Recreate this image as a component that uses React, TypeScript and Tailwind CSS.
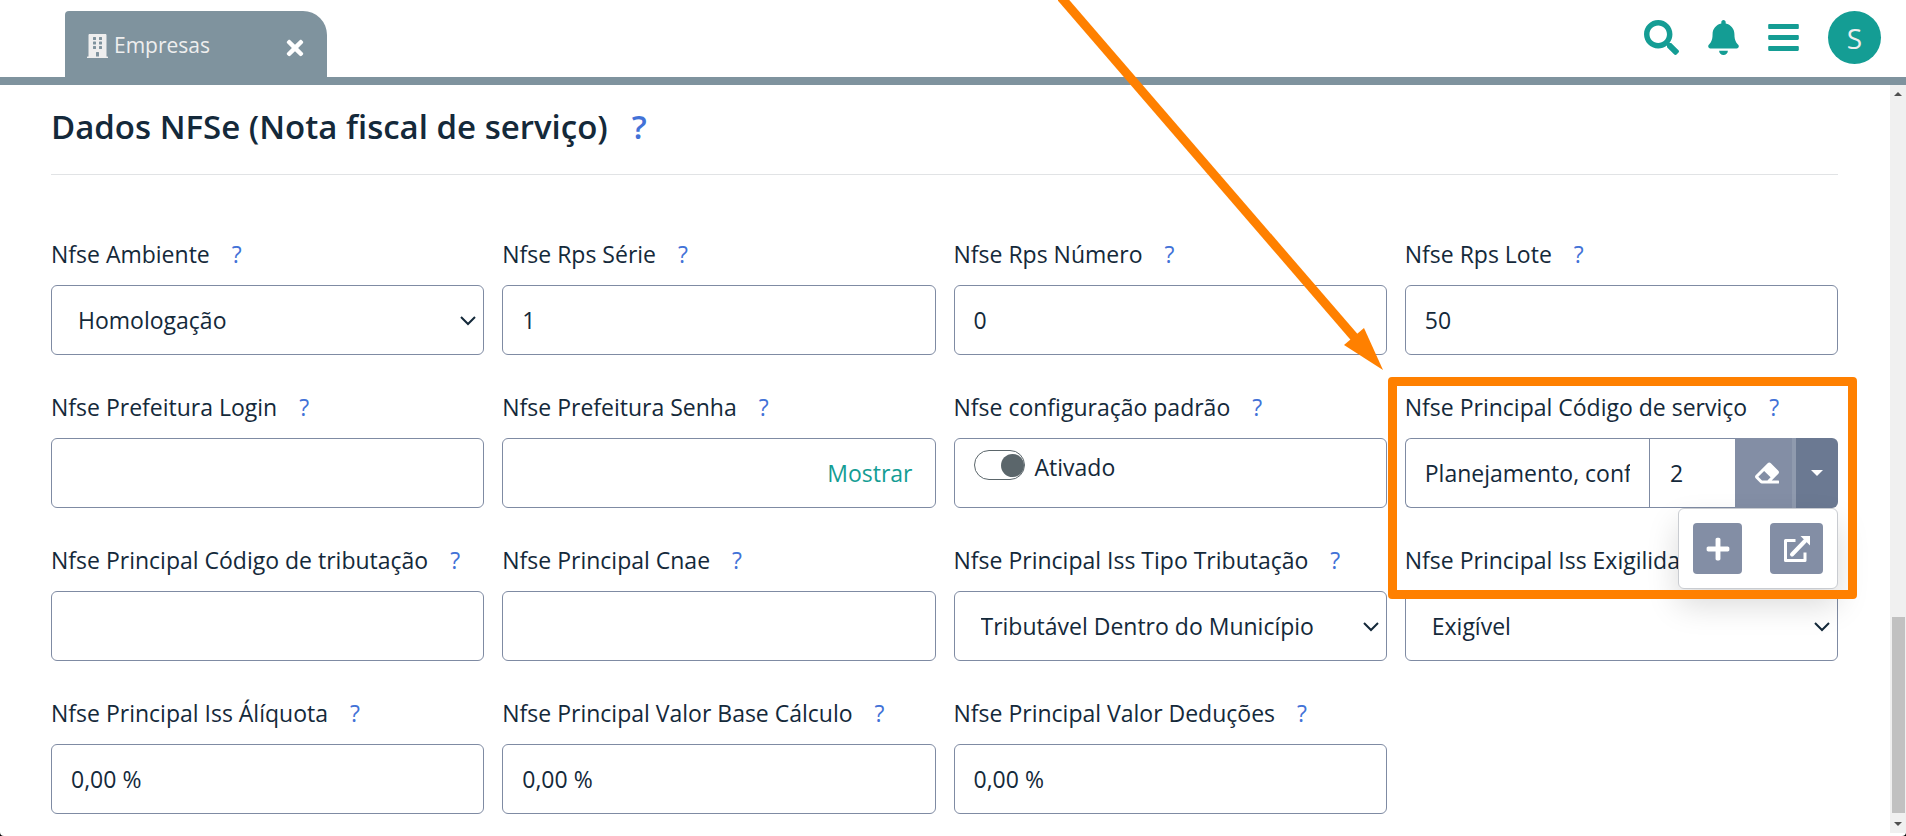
import React from "react";
import { FaBars, FaBell, FaBuilding, FaEraser, FaPlus, FaSearch, FaTimes } from "react-icons/fa";

const boxClass =
  "block h-[70px] w-full rounded-md border border-[#7f8ba3] bg-white text-[23px] text-[#14293a] outline-none";

function Field({ id, label, children }: { id: string; label: string; children: React.ReactNode }) {
  return (
    <div className="relative min-w-0">
      <div className="mb-[14px] flex h-[34px] items-center gap-[22px] whitespace-nowrap text-[23px]">
        <label htmlFor={id}>{label}</label>
        <a href="#ajuda" className="text-[#4272d7]">?</a>
      </div>
      {children}
    </div>
  );
}

function TextField({ id, label, value = "" }: { id: string; label: string; value?: string }) {
  return (
    <Field id={id} label={label}>
      <input id={id} type="text" defaultValue={value} className={`${boxClass} px-[19px]`} />
    </Field>
  );
}

function SelectField({ id, label, value }: { id: string; label: string; value: string }) {
  return (
    <Field id={id} label={label}>
      <div className="relative">
        <select id={id} className={`${boxClass} appearance-none px-[26px]`}>
          <option>{value}</option>
        </select>
        <svg
          viewBox="0 0 16 10"
          className="pointer-events-none absolute top-[31px] right-2 h-[10px] w-4 fill-none stroke-[#14293a] stroke-2"
        >
          <path d="M1 1l7 7 7-7" />
        </svg>
      </div>
    </Field>
  );
}

function ServiceCodeField() {
  return (
    <Field id="codigo-servico" label="Nfse Principal Código de serviço">
      <div className="flex h-[70px]">
        <div className="flex min-w-0 flex-1 rounded-l-md border border-r-0 border-[#7f8ba3]">
          <div className="min-w-0 flex-1 border-r border-[#7f8ba3] px-[19px]">
            <input
              id="codigo-servico"
              type="text"
              defaultValue="Planejamento, confecção"
              className="h-full w-full text-[23px] outline-none"
            />
          </div>
          <input
            aria-label="Código"
            type="text"
            defaultValue="2"
            className="w-[85px] px-5 text-[23px] outline-none"
          />
        </div>
        <button aria-label="Limpar" className="flex w-[61px] items-center justify-center border-r-4 border-[#8f9aae] bg-[#838ea5] pl-[6px] text-white">
          <FaEraser className="size-6" />
        </button>
        <button aria-label="Mais opções" className="flex w-[42px] items-center justify-center rounded-r-md bg-[#6b7992] text-white">
          <svg viewBox="0 0 12 6" className="h-[6px] w-3 fill-current">
            <path d="M0 0h12l-6 6z" />
          </svg>
        </button>
      </div>
      <div className="absolute top-full right-0 z-10 flex gap-7 rounded-md border border-[#c9ccd1] bg-white px-[14px] py-[14px] shadow-[0_16px_32px_rgba(0,0,0,0.15)]">
        <button aria-label="Adicionar" className="flex h-[51px] w-[49px] items-center justify-center rounded bg-[#838ea5] text-white">
          <FaPlus className="size-[26px]" />
        </button>
        <button aria-label="Abrir" className="flex h-[51px] w-[53px] items-center justify-center rounded bg-[#838ea5] text-white">
          <svg viewBox="0 0 26 26" className="size-[26px] fill-none stroke-white stroke-[3]">
            <path d="M11.500 4.500H1.500V24.500H21V16.500" strokeLinejoin="round" />
            <path d="M8 18.500L21 5" strokeWidth="4" strokeLinecap="round" />
            <path d="M16.500 0H26v9.500z" fill="white" stroke="none" />
          </svg>
        </button>
      </div>
    </Field>
  );
}

export default function App() {
  return (
    <div className="bg-black">
      <div className="relative flex min-h-screen flex-col overflow-hidden rounded-b-[4px] bg-white font-['Open_Sans','Noto_Sans',sans-serif] text-[#14293a]">
        <header className="flex h-[85px] shrink-0 items-end justify-between border-b-8 border-[#7f939e] pr-[25px] pl-[65px]">
          <div className="flex h-[66px] w-[262px] items-center justify-between rounded-tl rounded-tr-[24px] bg-[#7f939e] pt-1 pr-5 pl-[22px] text-[#eeeeee]">
            <a href="#empresas" className="flex items-center gap-[6px] text-[21px]">
              <FaBuilding className="h-6 w-[21px]" />
              Empresas
            </a>
            <button aria-label="Fechar" className="mt-1 text-white">
              <FaTimes className="size-6" />
            </button>
          </div>
          <div className="flex h-full items-center gap-[29px] pb-[2px] text-[#149d94]">
            <button aria-label="Buscar"><FaSearch className="size-[35px]" /></button>
            <button aria-label="Notificações"><FaBell className="h-[35px] w-[31px]" /></button>
            <button aria-label="Menu"><FaBars className="h-[35px] w-[31px]" /></button>
            <button aria-label="Conta" className="size-[53px] rounded-full bg-[#149d94] text-[28px] leading-none text-[#eeeeee]">S</button>
          </div>
        </header>

        <div className="flex min-h-0 flex-1">
          <main className="min-w-0 flex-1 pr-[52px] pl-[51px]">
            <h1 className="flex h-[90px] items-center gap-6 border-b border-[#e1e3e5] pb-[6px] text-[33px] font-semibold">
              Dados NFSe (Nota fiscal de serviço)
              <a href="#ajuda" className="text-[#4272d7]">?</a>
            </h1>
            <form className="mt-[62px] grid grid-cols-4 gap-x-[18px] gap-y-[35px]">
              <SelectField id="ambiente" label="Nfse Ambiente" value="Homologação" />
              <TextField id="rps-serie" label="Nfse Rps Série" value="1" />
              <TextField id="rps-numero" label="Nfse Rps Número" value="0" />
              <TextField id="rps-lote" label="Nfse Rps Lote" value="50" />
              <TextField id="login" label="Nfse Prefeitura Login" />
              <Field id="senha" label="Nfse Prefeitura Senha">
                <div className={`${boxClass} flex! items-center px-[22px]`}>
                  <input id="senha" type="password" className="min-w-0 flex-1 outline-none" />
                  <button type="button" className="text-[#149d94]">Mostrar</button>
                </div>
              </Field>
              <Field id="padrao" label="Nfse configuração padrão">
                <div className={`${boxClass} flex! items-start gap-[10px] px-[19px] pt-[11px]`}>
                  <input
                    id="padrao"
                    type="checkbox"
                    role="switch"
                    defaultChecked
                    className="flex h-[30px] w-[51px] appearance-none items-center justify-end rounded-full border border-[#5b666b] before:size-[23px] before:rounded-full before:bg-[#5b666b]"
                  />
                  <label htmlFor="padrao" className="leading-[34px]">Ativado</label>
                </div>
              </Field>
              <ServiceCodeField />
              <TextField id="tributacao" label="Nfse Principal Código de tributação" />
              <TextField id="cnae" label="Nfse Principal Cnae" />
              <SelectField id="tipo" label="Nfse Principal Iss Tipo Tributação" value="Tributável Dentro do Município" />
              <SelectField id="exigilidade" label="Nfse Principal Iss Exigilidade" value="Exigível" />
              <TextField id="aliquota" label="Nfse Principal Iss Álíquota" value="0,00 %" />
              <TextField id="base" label="Nfse Principal Valor Base Cálculo" value="0,00 %" />
              <TextField id="deducoes" label="Nfse Principal Valor Deduções" value="0,00 %" />
            </form>
          </main>
          <div aria-hidden="true" className="mb-[3px] flex w-4 flex-col items-center justify-between bg-[#f0f0f0] py-[7px]">
            <svg viewBox="0 0 8 4" className="h-1 w-2 fill-[#505050]"><path d="M0 4l4-4 4 4z" /></svg>
            <div className="mt-auto mb-[9px] h-[196px] w-[13px] bg-[#c1c1c1]" />
            <svg viewBox="0 0 8 4" className="h-1 w-2 fill-[#505050]"><path d="M0 0h8l-4 4z" /></svg>
          </div>
        </div>

        <div className="pointer-events-none absolute top-[377px] right-[49px] z-20 h-[222px] w-[469px] rounded border-[9px] border-[#ff8000]" />
        <svg viewBox="0 0 330 370" className="pointer-events-none absolute top-0 right-[518px] z-20 h-[370px] w-[330px] fill-[#ff8000] stroke-[#ff8000]">
          <path d="M1 -5L297 338" strokeWidth="9" />
          <path d="M325 370L306 328 286 345z" stroke="none" />
        </svg>
      </div>
    </div>
  );
}
